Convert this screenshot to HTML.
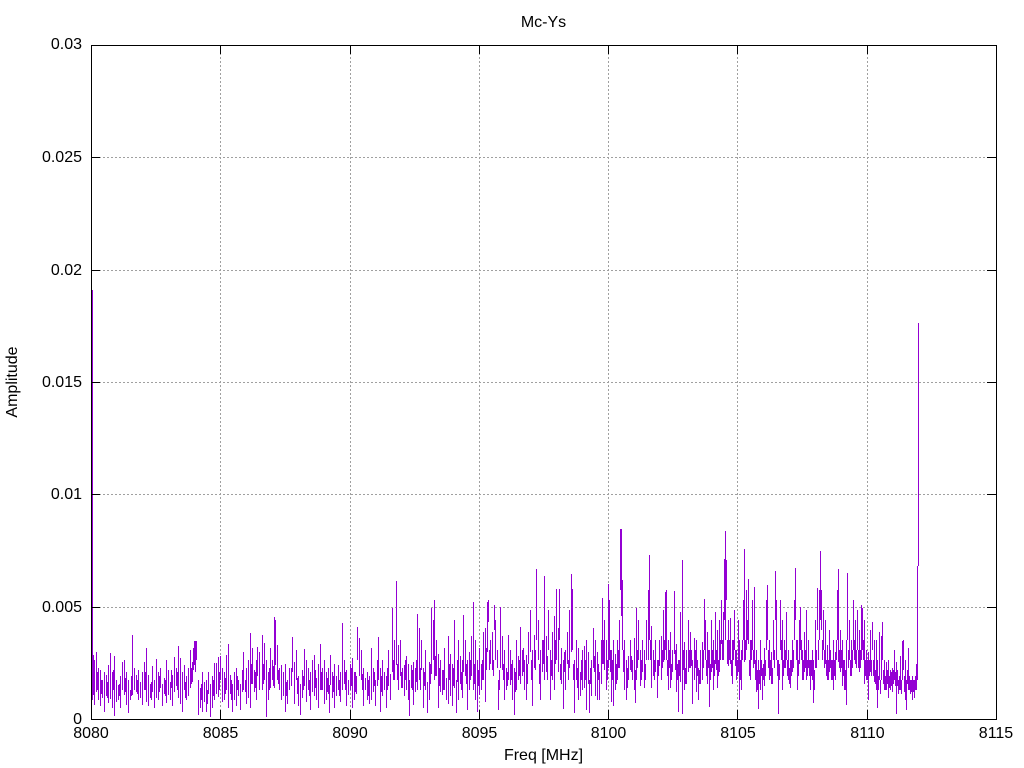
<!DOCTYPE html>
<html><head><meta charset="utf-8"><title>Mc-Ys</title>
<style>html,body{margin:0;padding:0;background:#fff}svg{display:block}text{font-family:"Liberation Sans",sans-serif;font-size:16px;fill:#000}</style></head>
<body>
<svg width="1024" height="768" viewBox="0 0 1024 768" xmlns="http://www.w3.org/2000/svg">
<rect width="1024" height="768" fill="#fff"/>
<g stroke="#a0a0a0" stroke-width="1" stroke-dasharray="2 2" fill="none" shape-rendering="crispEdges">
<path d="M220.5 45V719M350.5 45V719M479.5 45V719M608.5 45V719M737.5 45V719M867.5 45V719"/>
<path d="M91 157.5H996M91 270.5H996M91 382.5H996M91 494.5H996M91 607.5H996"/>
</g>
<g stroke="#9400d3" stroke-width="1" fill="none" shape-rendering="crispEdges" transform="translate(.5 0)">
<path d="M91 290V565M92 290V565M92 565V700M93 655V695M94 660V705M96 652V692M98 668V700M100 670V706M102 680V698M104 672V712M106 675V696M108 665V703M110 653V699M112 672V708M114 656V716M116 680V702M118 685V700M120 676V708M122 662V690M124 660V695M126 672V705M128 680V713M130 690V700M132 635V695M134 668V690M136 675V692M138 670V700M140 682V698M142 672V705M144 662V690M146 648V702M148 675V706M150 684V698M152 666V692M154 680V708M156 659V698M158 672V700M160 668V688M162 684V706M164 678V694M166 660V703M168 670V695M170 682V700M172 675V706M174 657V692M176 668V686M178 646V698M180 658V704M182 672V712M184 665V690M186 676V700M188 668V696M190 650V688M192 662V682M193 648V670M194 641V665M195 641V672M196 641V660M198 680V715M200 688V708M202 672V712M204 682V702M206 680V712M208 672V694M210 684V717M212 676V708M214 663V700M216 663V694M218 657V697M220 656V680M222 668V702M224 672V700M226 655V690M228 644V708M230 675V694M232 684V712M234 672V700M236 668V706M238 680V696M240 684V710M242 670V692M243 652V690M246 668V704M248 660V698M250 633V708M252 648V684M254 670V692M256 660V700M257 647V676M259 652V690M262 635V690M264 643V680M266 660V717M268 672V700M270 648V688M272 660V680M274 617V688M275 620V665M277 645V680M279 668V690M281 665V700M283 672V696M285 664V712M287 680V704M289 668V690M292 637V672M294 662V704M296 650V680M298 676V706M300 684V715M302 670V698M304 649V686M306 660V702M308 668V690M310 672V710M312 660V692M314 655V696M316 678V700M318 664V708M320 644V690M322 668V690M324 660V704M326 672V700M328 668V694M329 685V713M330 655V685M332 672V698M334 664V708M336 676V696M338 665V690M340 672V702M342 623V690M344 660V684M346 670V706M348 680V695M350 664V690M352 658V708M354 672V700M356 676V694M357 627V660M359 638V676M361 650V680M363 668V706M365 678V690M367 672V700M369 676V704M371 648V700M373 668V692M375 680V706M377 660V686M378 637V680M380 668V712M382 660V696M384 672V690M386 676V708M388 650V686M390 674V700M392 608V672M394 640V680M396 581V665M398 645V690M400 640V676M402 668V688M404 665V696M406 656V690M408 664V700M409 680V716M411 665V688M413 662V705M415 668V692M417 614V690M419 628V680M421 640V670M423 668V708M425 650V690M427 682V713M429 662V700M431 608V674M433 620V660M434 600V680M436 640V676M438 654V708M440 660V692M442 670V695M444 648V690M446 678V700M448 636V704M450 654V696M452 664V706M454 620V688M456 680V713M458 640V700M460 656V684M462 660V698M463 615V672M465 640V676M467 660V710M469 652V690M471 636V676M473 602V690M475 640V700M477 660V712M479 648V695M481 664V690M483 632V680M485 628V702M487 602V652M488 600V622M490 640V664M492 632V670M494 605V630M495 620V660M497 650V668M498 680V710M500 607V668M502 636V670M504 650V700M506 668V690M508 635V680M510 650V685M512 660V700M514 668V715M516 640V690M518 656V680M520 627V684M522 650V676M524 660V690M526 655V700M528 632V664M530 610V652M532 650V706M534 635V668M536 569V640M538 620V660M540 650V700M542 640V672M544 576V680M546 636V672M548 610V650M550 650V700M552 632V680M554 616V690M556 589V660M558 628V672M559 589V640M561 648V684M563 660V709M565 650V690M567 632V664M569 610V668M571 574V652M572 589V650M574 660V713M576 640V680M578 648V700M580 672V696M582 650V690M584 646V688M586 640V710M588 652V684M589 680V713M591 660V696M593 628V668M595 640V696M597 652V700M599 672V700M601 640V684M602 598V664M604 620V670M606 640V690M608 584V668M609 600V660M611 650V702M613 640V706M615 654V690M617 640V680M619 620V668M620 529V590M621 529V616M622 580V650M624 640V690M626 660V700M628 656V680M630 640V670M632 660V680M634 638V690M635 670V703M636 608V680M638 620V660M640 650V686M642 640V672M644 650V688M646 620V660M648 590V660M649 555V640M651 626V688M653 650V676M655 640V672M657 660V698M659 640V666M661 636V680M663 610V662M665 592V650M666 590V660M668 640V690M670 632V688M672 650V672M674 591V654M676 644V692M678 660V712M680 612V682M682 560V714M684 642V690M686 650V684M688 620V672M690 632V668M692 660V704M694 638V680M696 640V692M698 668V700M700 650V684M702 642V680M704 599V650M705 620V660M707 632V684M709 650V707M711 620V672M713 640V690M715 612V664M717 630V688M719 620V672M721 600V644M723 612V660M724 559V620M725 531V640M726 560V600M728 620V666M730 618V664M732 640V684M734 610V650M736 650V680M738 620V672M739 640V700M741 650V690M743 600V640M744 549V662M746 590V650M748 579V644M750 640V680M752 600V650M754 587V664M756 650V692M758 660V709M760 640V690M762 668V700M764 648V686M766 600V650M767 585V640M769 640V680M771 652V684M773 620V660M775 571V620M776 600V660M778 660V714M780 600V650M782 620V690M784 640V668M786 612V660M788 650V680M790 660V688M792 640V672M794 600V640M795 568V620M797 640V690M799 620V664M800 607V650M802 650V680M804 632V672M806 610V680M808 640V668M810 660V690M812 650V680M813 660V703M815 620V668M817 588V630M819 590V640M820 551V620M821 590V630M823 610V650M825 620V664M827 645V680M829 630V672M831 660V680M833 640V690M835 652V680M837 590V640M838 569V662M840 630V672M842 640V686M844 660V690M846 640V705M847 573V640M849 620V660M851 640V676M853 600V650M855 620V664M857 610V650M859 630V672M861 605V660M862 608V650M864 620V684M866 650V680M868 652V700M870 630V672M872 622V650M874 640V682M876 640V690M877 660V708M879 632V680M881 636V680M882 622V660M884 660V690M886 662V690M888 660V698M890 670V690M892 668V692M894 650V680M896 662V714M898 680V694M900 656V690M902 641V680M903 640V670M905 660V700M906 680V710M908 648V690M910 680V694M912 676V700M914 680V698M916 664V690M917 566V680M918 323V566"/>
<path d="M97 672V690M101 680V694M107 682V698M113 670V690M119 684V696M125 678V692M131 676V696M137 680V694M145 672V690M151 682V700M159 676V692M165 680V696M171 670V688M177 672V690M185 682V698M191 668V684M201 684V700M207 690V704M213 680V696M219 672V690M225 678V694M231 680V700M237 676V690M245 680V692M251 664V684M255 672V688M263 664V684M269 668V690M273 666V686M278 670V684M286 682V696M291 668V686M297 678V694M303 676V690M309 680V696M315 670V688M321 672V690M327 678V692M333 676V692M339 680V696M345 672V690M351 668V686M355 672V692M362 674V690M368 680V696M374 672V686M381 676V692M387 668V690M393 660V680M397 664V680M401 672V688M405 660V680M412 670V690M416 660V682M420 668V690M424 672V686M430 664V684M435 656V676M439 668V686M443 670V690M449 664V680M453 668V686M457 660V682M461 672V690M466 664V684M470 660V680M474 664V684M478 670V686M482 660V680M486 648V670M489 650V670M493 660V676M499 670V690M503 664V680M507 672V686M511 664V680M515 672V692M519 660V676M523 648V672M527 664V684M531 660V680M535 650V670M539 664V684M543 640V664M547 656V680M551 660V676M555 640V664M560 664V680M564 652V672M568 660V680M573 664V680M577 668V688M581 660V680M585 660V680M590 668V684M594 656V672M598 664V680M603 640V664M607 660V680M610 650V672M612 660V680M616 664V684M618 650V668M623 650V672M627 668V688M631 656V672M637 650V668M641 660V680M645 664V680M650 640V660M654 660V680M658 660V676M662 650V668M664 640V660M667 660V676M669 650V668M671 664V680M675 650V670M677 664V680M679 660V676M683 650V670M685 668V684M689 650V668M691 650V666M695 650V668M697 660V676M699 670V684M703 650V668M706 660V676M708 650V668M710 664V680M712 650V668M714 660V676M716 650V670M718 660V676M720 640V660M722 640V660M727 640V664M729 640V660M731 660V676M733 640V660M735 650V666M737 660V676M740 660V680M742 640V660M745 640V660M747 620V640M749 660V676M751 640V660M753 650V668M755 660V680M757 670V690M759 670V684M761 660V676M763 664V680M765 660V676M768 650V668M770 660V676M772 668V684M774 650V668M777 660V676M779 664V680M781 640V660M783 660V676M785 650V668M787 660V676M789 668V684M791 660V676M793 650V668M796 640V660M798 660V676M801 640V660M803 660V680M805 650V668M807 660V676M809 660V676M811 660V676M814 670V690M816 650V668M818 640V660M822 640V660M824 650V668M826 660V676M828 660V680M830 650V668M832 660V680M834 660V676M836 640V660M839 650V668M841 650V668M843 660V676M845 670V690M848 650V668M850 660V676M852 650V668M854 640V660M856 650V668M858 650V668M860 650V668M863 640V660M865 660V676M867 660V680M869 660V676M871 660V676M873 660V676M875 670V684M878 676V690M880 680V694M883 670V684M885 676V690M887 670V684M889 676V688M891 672V686M893 670V684M895 672V686M897 670V686M899 676V690M901 680V694M904 676V692M907 670V684M909 676V690M911 680V692M913 680V692M915 676V690"/>
</g>
<g stroke="#000" stroke-width="1" fill="none" shape-rendering="crispEdges">
<path d="M220.5 45V54M350.5 45V54M479.5 45V54M608.5 45V54M737.5 45V54M867.5 45V54"/>
<path d="M220.5 719V710M350.5 719V710M479.5 719V710M608.5 719V710M737.5 719V710M867.5 719V710"/>
<path d="M91 157.5H100M91 270.5H100M91 382.5H100M91 494.5H100M91 607.5H100"/>
<path d="M996 157.5H987M996 270.5H987M996 382.5H987M996 494.5H987M996 607.5H987"/>
<rect x="91.5" y="45.5" width="905" height="674"/>
</g>
<text x="543.5" y="27" text-anchor="middle">Mc-Ys</text>
<g text-anchor="end">
<text x="82" y="49">0.03</text>
<text x="82" y="162">0.025</text>
<text x="82" y="275">0.02</text>
<text x="82" y="387">0.015</text>
<text x="82" y="499">0.01</text>
<text x="82" y="612">0.005</text>
<text x="82" y="724">0</text>
</g>
<g text-anchor="middle">
<text x="91" y="738">8080</text>
<text x="220.5" y="738">8085</text>
<text x="350" y="738">8090</text>
<text x="479.5" y="738">8095</text>
<text x="608.5" y="738">8100</text>
<text x="738" y="738">8105</text>
<text x="867.5" y="738">8110</text>
<text x="996" y="738">8115</text>
<text x="543.5" y="760">Freq [MHz]</text>
<text transform="translate(17 382) rotate(-90)">Amplitude</text>
</g>
</svg>
</body></html>
